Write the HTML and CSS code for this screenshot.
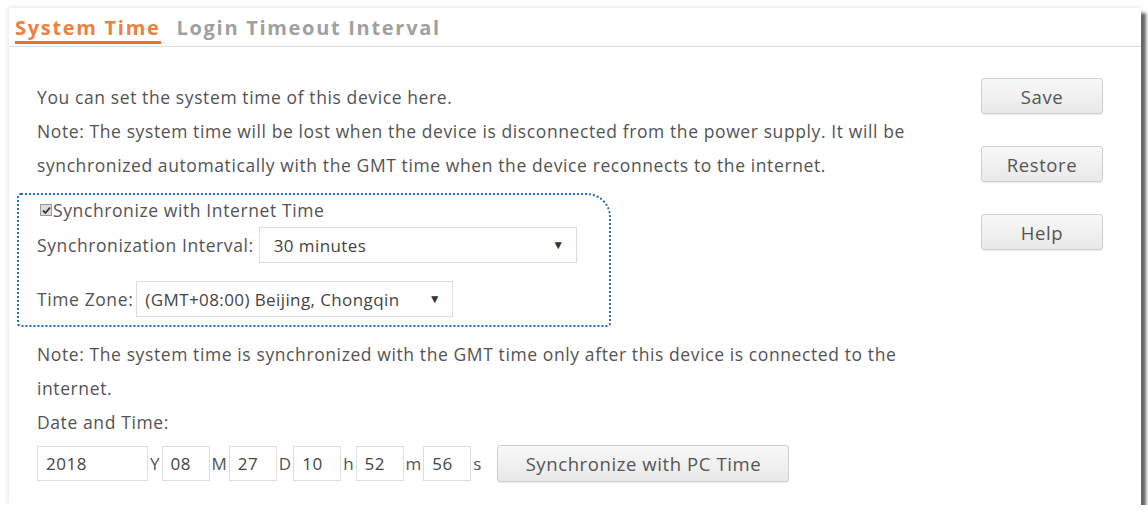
FILE: index.html
```html
<!doctype html>
<html lang="en">
<head>
    <meta charset="UTF-8">
    <title>System Time</title>
    <link rel="stylesheet" href="styles.css">
</head>
<body>

    <div id="frame">

        <div class="tabs">
            <span class="tab active">System Time</span>
            <span class="tab">Login Timeout Interval</span>
        </div>

        <div class="content">

            <div class="main">
                <p>You can set the system time of this device here.</p>
                <p>Note: The system time will be lost when the device is disconnected from the power supply. It will be synchronized automatically with the GMT time when the device reconnects to the internet.</p>

                <div class="sync">
                    <label class="check">
                        <span class="box">
                            <svg width="9" height="9" viewBox="0 0 9 9"><path d="M1 4.5 L3.5 7 L8 1.5" fill="none" stroke="#333" stroke-width="1.8"/></svg>
                        </span>Synchronize with Internet Time
                    </label>

                    <div class="row interval">
                        <span>Synchronization Interval:</span>
                        <span class="select wide">
                            <select><option>30 minutes</option></select>
                        </span>
                    </div>

                    <div class="row zone">
                        <span>Time Zone:</span>
                        <span class="select">
                            <select><option>(GMT+08:00) Beijing, Chongqin</option></select>
                        </span>
                    </div>
                </div>

                <p class="note">Note: The system time is synchronized with the GMT time only after this device is connected to the internet.</p>
                <p>Date and Time:</p>

                <div class="date">
                    <input class="year" value="2018"><span class="unit">Y</span>
                    <input value="08"><span class="unit">M</span>
                    <input value="27"><span class="unit">D</span>
                    <input value="10"><span class="unit">h</span>
                    <input value="52"><span class="unit">m</span>
                    <input value="56"><span class="unit">s</span>
                    <button class="btn pc">Synchronize with PC Time</button>
                </div>
            </div>

            <div class="side">
                <button class="btn">Save</button>
                <button class="btn">Restore</button>
                <button class="btn">Help</button>
            </div>

        </div>

    </div>

</body>
</html>
```

FILE: styles.css
```css
body{
    margin: 0;
    background-color: #fff;
    font-family: "Open Sans", sans-serif;
    font-size: 17.5px;
    letter-spacing: 0.6px;
    color: #535353;
}

#frame{
    margin: 8px 0 0 9px;
    width: 1132px;
    height: 497px;
    background-color: #fff;
    box-shadow: 5px 5px 3px rgba(0,0,0,0.6), -1px -1px 4px rgba(0,0,0,0.1);
}

.tabs{
    padding: 9px 0 2px 6px;
    border-bottom: 1px solid #dedede;
    display: flex;
    gap: 16px;
}

.tab{
    font-weight: bold;
    font-size: 20px;
    letter-spacing: 1.7px;
    line-height: 22px;
    padding-bottom: 2px;
    color: #a0a0a0;
    border-bottom: 3px solid transparent;
}

.tab.active{
    color: #ee8040;
    border-bottom-color: #e8702e;
}

.content{
    display: flex;
    padding: 0 0 0 8px;
}

.main{
    width: 935px;
    padding-top: 33px;
}

p{
    margin: 0;
    padding-left: 20px;
    line-height: 34px;
}

.sync{
    margin-top: 11px;
    width: 572px;
    padding: 0 0 8px 18px;
    border: 2px dotted #2a6cb8;
    border-radius: 4px 24px 4px 4px;
}

.check{
    display: flex;
    align-items: center;
    height: 30px;
    margin-left: 3px;
}

.check .box{
    width: 10px;
    height: 10px;
    border: 1px solid #999;
    background-color: #ddd;
    display: flex;
    align-items: center;
    justify-content: center;
    margin-right: 1px;
}

.row{
    display: flex;
    align-items: center;
}

.row.interval{
    margin-top: 2px;
}

.row.zone{
    margin-top: 18px;
}

.select{
    position: relative;
    margin-left: 3px;
}

.select select{
    appearance: none;
    -webkit-appearance: none;
    font-family: "Open Sans", sans-serif;
    font-size: 17px;
    letter-spacing: 0.4px;
    color: #444;
    height: 36px;
    width: 317px;
    padding: 0 0 0 8px;
    border: 1px solid #ddd;
    background-color: #fff;
    border-radius: 0;
}

.select.wide{
    margin-left: 5px;
}

.select.wide select{
    width: 318px;
    padding-left: 14px;
}

.select::after{
    content: "\25BC";
    position: absolute;
    right: 12px;
    top: 9px;
    font-size: 12px;
    color: #333;
    pointer-events: none;
}

.note{
    margin-top: 10px;
}

.date{
    display: flex;
    align-items: center;
    margin-top: 6px;
    padding-left: 20px;
}

.date input{
    font-family: "Open Sans", sans-serif;
    font-size: 17px;
    letter-spacing: 0.5px;
    color: #444;
    width: 48px;
    height: 35px;
    box-sizing: border-box;
    padding: 0 0 0 8px;
    border: 1px solid #ddd;
    margin: 0;
}

.date input.year{
    width: 111px;
}

.unit{
    margin: 0 2px;
    font-size: 17px;
    letter-spacing: 0;
}

.btn{
    font-family: "Open Sans", sans-serif;
    font-size: 18.5px;
    letter-spacing: 0.6px;
    color: #555;
    height: 36px;
    padding: 0;
    border: 1px solid #cfcfcf;
    border-radius: 3px;
    background: linear-gradient(#f8f8f8, #e9e9e9);
    box-shadow: 0 1px 1px rgba(0,0,0,0.08);
}

.btn.pc{
    width: 292px;
    height: 37px;
    margin-left: 14px;
}

.side{
    display: flex;
    flex-direction: column;
    gap: 32px;
    padding: 31px 0 0 29px;
}

.side .btn{
    width: 122px;
}
```
